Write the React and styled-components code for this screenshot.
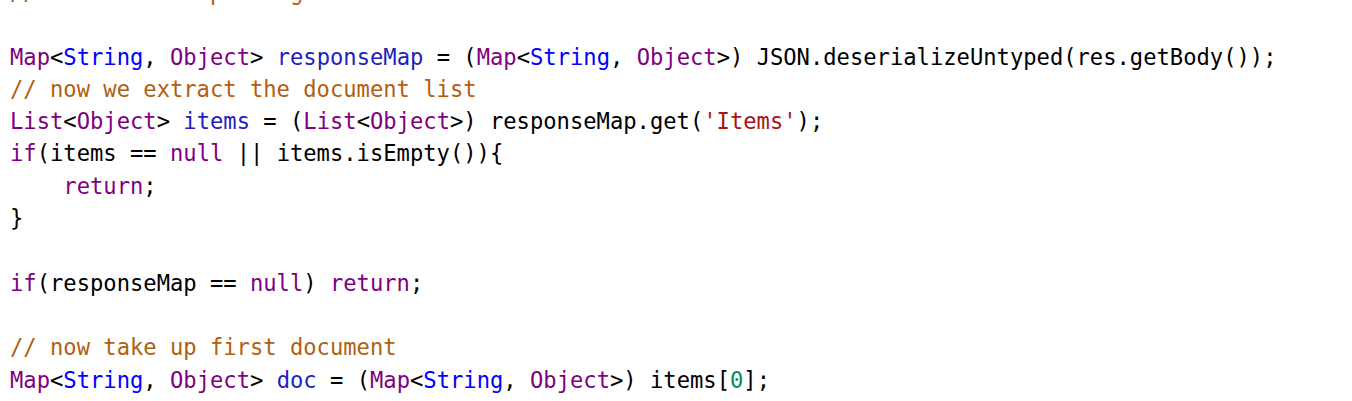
import React from "react";
import styled, { createGlobalStyle } from "styled-components";

const GlobalStyle = createGlobalStyle`
  html, body {
    margin: 0;
    padding: 0;
    background: #ffffff;
    overflow: hidden;
  }
`;

const Editor = styled.div`
  width: 1352px;
  height: 401px;
  overflow: hidden;
  background: #ffffff;
`;

const Code = styled.pre`
  margin: -24px 0 0 0;
  padding: 0 0 0 10px;
  font-family: "DejaVu Sans Mono", "Liberation Mono", monospace;
  font-size: 22.15px;
  line-height: 32.3px;
  color: #000000;
  white-space: pre;
`;

const Line = styled.div`
  height: 32.3px;
`;

const colors = {
  type: "#800080",
  builtin: "#0000ff",
  ident: "#2121c1",
  comment: "#b0600f",
  str: "#a31515",
  num: "#09885a",
  kw: "#800080",
  plain: "#000000",
};

const Tok = styled.span`
  color: ${(p) => colors[p.$k] || "#000000"};
`;

const T = ({ k, children }) => <Tok $k={k}>{children}</Tok>;

const MapType = () => (
  <>
    <T k="type">Map</T>&lt;<T k="builtin">String</T>, <T k="type">Object</T>&gt;
  </>
);

const App = () => {
  return (
    <Editor>
      <GlobalStyle />
      <Code>
        <Line>
          <T k="comment">// build the map using JSON</T>
        </Line>
        <Line> </Line>
        <Line>
          <MapType /> <T k="ident">responseMap</T> = (<MapType />) JSON.deserializeUntyped(res.getBody());
        </Line>
        <Line>
          <T k="comment">// now we extract the document list</T>
        </Line>
        <Line>
          <T k="type">List</T>&lt;<T k="type">Object</T>&gt; <T k="ident">items</T> = (<T k="type">List</T>&lt;<T k="type">Object</T>&gt;) responseMap.get(<T k="str">'Items'</T>);
        </Line>
        <Line>
          <T k="kw">if</T>(items == <T k="kw">null</T> || items.isEmpty()){"{"}
        </Line>
        <Line>
          {"    "}<T k="kw">return</T>;
        </Line>
        <Line>{"}"}</Line>
        <Line> </Line>
        <Line>
          <T k="kw">if</T>(responseMap == <T k="kw">null</T>) <T k="kw">return</T>;
        </Line>
        <Line> </Line>
        <Line>
          <T k="comment">// now take up first document</T>
        </Line>
        <Line>
          <MapType /> <T k="ident">doc</T> = (<MapType />) items[<T k="num">0</T>];
        </Line>
      </Code>
    </Editor>
  );
};

export default App;
